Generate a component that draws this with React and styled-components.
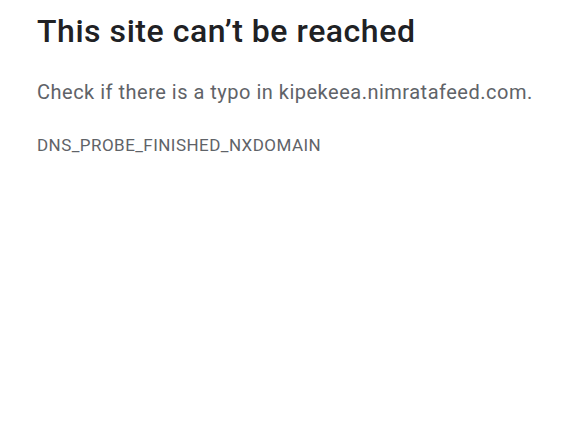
import React from 'react'
import styled, { createGlobalStyle } from 'styled-components'

const GlobalStyle = createGlobalStyle`
  html, body {
    margin: 0;
    padding: 0;
    background: #ffffff;
  }
  body {
    font-family: Roboto, "Liberation Sans", sans-serif;
  }
`

const Page = styled.main`
  padding: 10px 37px 0;
  width: 584px;
  height: 438px;
  box-sizing: border-box;
  background: #fff;
`

const Title = styled.h1`
  margin: 0;
  font-size: 32px;
  font-weight: 500;
  letter-spacing: 0.55px;
  line-height: 42px;
  color: #202124;
`

const Summary = styled.p`
  margin: 27px 0 0;
  font-size: 20px;
  letter-spacing: 0.5px;
  line-height: 26px;
  color: #5f6368;
`

const ErrorCode = styled.div`
  margin: 30px 0 0;
  font-size: 17px;
  letter-spacing: 0.45px;
  line-height: 20px;
  color: #5f6368;
`

export default function App() {
  return (
    <>
      <GlobalStyle />
      <Page>
        <Title>This site can’t be reached</Title>
        <Summary>Check if there is a typo in kipekeea.nimratafeed.com.</Summary>
        <ErrorCode>DNS_PROBE_FINISHED_NXDOMAIN</ErrorCode>
      </Page>
    </>
  )
}
